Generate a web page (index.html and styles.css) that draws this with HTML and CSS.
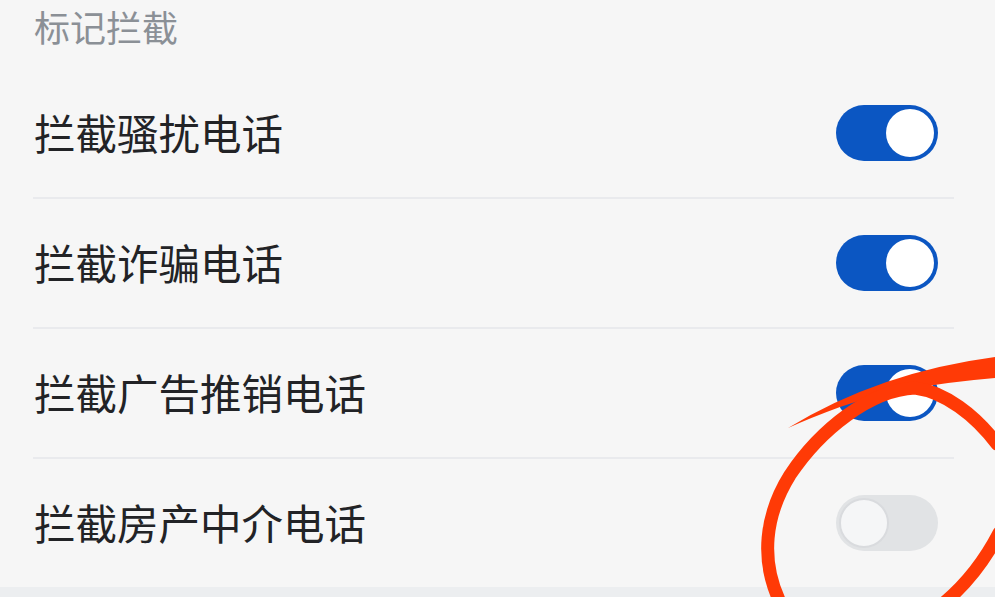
FILE: index.html
```html
<!DOCTYPE html>
<html lang="zh-CN">
<head>
  <meta charset="UTF-8" />
  <meta name="viewport" content="width=device-width, initial-scale=1.0" />
  <title>标记拦截</title>
  <link rel="stylesheet" href="styles.css">
</head>
<body>
  <div class="page">
    <div class="section-title">标记拦截</div>

    <ul class="list">
      <li class="row">
        <span class="label">拦截骚扰电话</span>
        <span class="switch on"><span class="knob"></span></span>
      </li>
      <li class="row">
        <span class="label">拦截诈骗电话</span>
        <span class="switch on"><span class="knob"></span></span>
      </li>
      <li class="row">
        <span class="label">拦截广告推销电话</span>
        <span class="switch on"><span class="knob"></span></span>
      </li>
      <li class="row">
        <span class="label">拦截房产中介电话</span>
        <span class="switch"><span class="knob"></span></span>
      </li>
    </ul>

    <div class="bottom-band"></div>

    <!-- hand-drawn red circle marking the last switch -->
    <svg class="scribble" width="995" height="597" viewBox="0 0 995 597">
      <path d="M788 428 Q 880 372 995 357 L 995 378 Q 900 386 840 407 Q 810 418 788 428 Z" fill="#ff3a06" />
      <path d="M997 444 C 975 415, 945 392, 915 388 C 870 390, 820 430, 790 475 C 765 515, 760 560, 780 602" fill="none" stroke="#ff3a06" stroke-width="13" stroke-linecap="round" />
      <path d="M999 533 C 985 560, 965 585, 945 602" fill="none" stroke="#ff3a06" stroke-width="13" stroke-linecap="round" />
    </svg>
  </div>
</body>
</html>
```

FILE: styles.css
```css
* {
  box-sizing: border-box;
}

body {
  margin: 0;
  background-color: #f6f6f6;
  font-family: "Noto Sans CJK SC", "Noto Sans", sans-serif;
  color: #1f2022;
  overflow: hidden;
}

.page {
  position: relative;
  width: 995px;
  height: 597px;
}

.section-title {
  height: 69px;
  padding-left: 34px;
  font-size: 36px;
  line-height: 52px;
  color: #8b9096;
}

.list {
  list-style: none;
  margin: 0 41px 0 33px;
  padding: 0;
}

.row {
  display: flex;
  align-items: center;
  justify-content: space-between;
  height: 130px;
  padding: 0 16px 0 1px;
  border-bottom: 2px solid #e9eaed;
}

.row:last-child {
  border-bottom: none;
  height: 128px;
}

.label {
  font-size: 41.5px;
  line-height: 1;
  color: #222326;
}

.switch {
  display: flex;
  align-items: center;
  width: 102px;
  height: 56px;
  padding: 3px;
  border-radius: 28px;
  background-color: #e1e3e5;
}

.switch .knob {
  width: 50px;
  height: 50px;
  border-radius: 50%;
  background-color: #f5f6f7;
  border: 2px solid #d9dbde;
}

.switch.on {
  justify-content: flex-end;
  background-color: #0b56c2;
}

.switch.on .knob {
  width: 48px;
  height: 48px;
  margin-right: 1px;
  background-color: #ffffff;
  border: none;
}

.bottom-band {
  height: 12px;
  background-color: #eceef0;
}

.scribble {
  position: absolute;
  top: 0;
  left: 0;
  pointer-events: none;
}
```
